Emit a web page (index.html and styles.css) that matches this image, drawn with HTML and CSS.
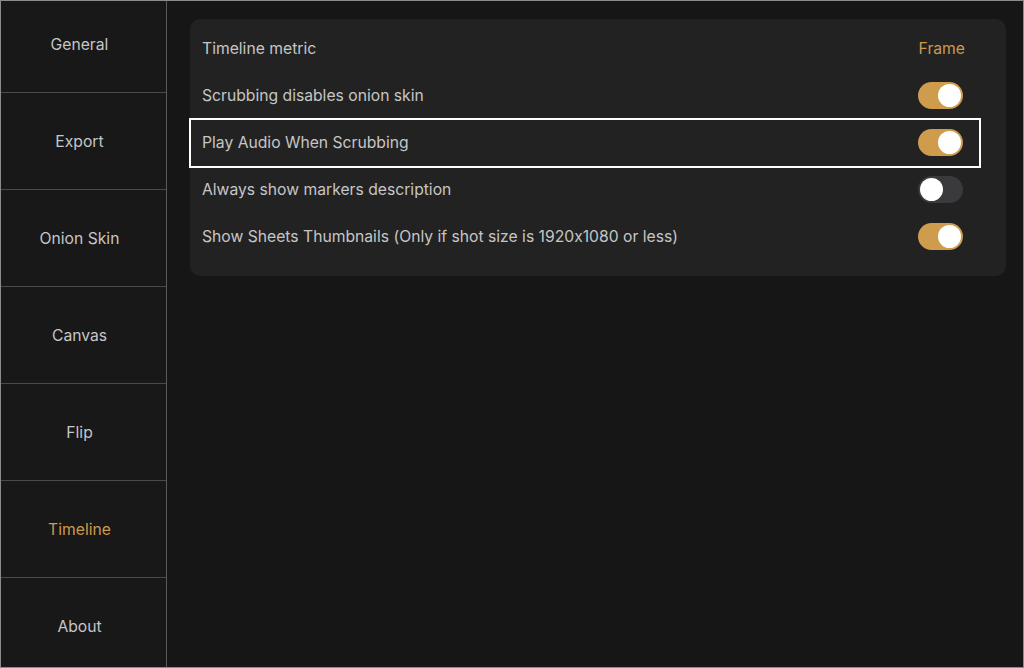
FILE: index.html
```html
<!DOCTYPE html>
<html lang="en">
<head>
<meta charset="utf-8">
<title>Settings - Timeline</title>
<link rel="stylesheet" href="styles.css">
</head>
<body>
<div class="app">
  <nav class="sidebar">
    <ul class="nav-list">
      <li class="nav-item">General</li>
      <li class="nav-item">Export</li>
      <li class="nav-item">Onion Skin</li>
      <li class="nav-item">Canvas</li>
      <li class="nav-item">Flip</li>
      <li class="nav-item active">Timeline</li>
      <li class="nav-item">About</li>
    </ul>
  </nav>
  <main class="content">
    <section class="card">
      <div class="row">
        <span class="label">Timeline metric</span>
        <span class="value">Frame</span>
      </div>
      <div class="row">
        <span class="label">Scrubbing disables onion skin</span>
        <span class="switch on"><span class="knob"></span></span>
      </div>
      <div class="row highlighted">
        <span class="label">Play Audio When Scrubbing</span>
        <span class="switch on"><span class="knob"></span></span>
      </div>
      <div class="row">
        <span class="label">Always show markers description</span>
        <span class="switch"><span class="knob"></span></span>
      </div>
      <div class="row">
        <span class="label">Show Sheets Thumbnails (Only if shot size is 1920x1080 or less)</span>
        <span class="switch on"><span class="knob"></span></span>
      </div>
    </section>
  </main>
</div>
</body>
</html>
```

FILE: styles.css
```css
* { box-sizing: border-box; }
html, body {
  margin: 0;
  padding: 0;
  background: #161616;
}
body {
  font-family: Inter, "Noto Sans", "Liberation Sans", sans-serif;
  font-size: 15.7px;
  font-feature-settings: "calt" 0;
  color: #c6c6c6;
}
.app {
  display: flex;
  width: 1024px;
  height: 668px;
  border: 1px solid #8c8c8c;
  overflow: hidden;
  background: #161616;
}
.sidebar {
  width: 166px;
  flex: none;
  background: #181818;
  border-right: 1px solid #5a5a5a;
  overflow: hidden;
}
.nav-list {
  list-style: none;
  margin: -5px 0 0;
  padding: 0;
}
.nav-item {
  height: 97px;
  display: flex;
  align-items: center;
  justify-content: center;
  padding: 1px 8px 0 0;
  border-bottom: 1px solid #4a4a4a;
  color: #c6c6c6;
}
.nav-item.active { color: #cc9a4e; }
.content {
  flex: 1;
  padding: 18px 17px 0 23px;
}
.card {
  background: #222222;
  border-radius: 10px;
  padding: 6px 0 17px;
}
.row {
  position: relative;
  height: 46.8px;
  display: flex;
  align-items: center;
  justify-content: space-between;
  padding: 1px 43px 0 12px;
}
.row.highlighted::after {
  content: "";
  position: absolute;
  left: -1px;
  top: -1px;
  width: 788px;
  height: 46px;
  border: 2px solid #ffffff;
}
.label { color: #c6c6c6; }
.value { color: #cc9a4e; margin-right: -2px; }
.switch {
  width: 45px;
  height: 27px;
  border-radius: 14px;
  background: #3a3a3c;
  display: flex;
  align-items: center;
  padding: 2px;
  flex: none;
}
.switch.on {
  background: #cf9c4e;
  justify-content: flex-end;
}
.knob {
  width: 23px;
  height: 23px;
  border-radius: 50%;
  background: #ffffff;
}
```
